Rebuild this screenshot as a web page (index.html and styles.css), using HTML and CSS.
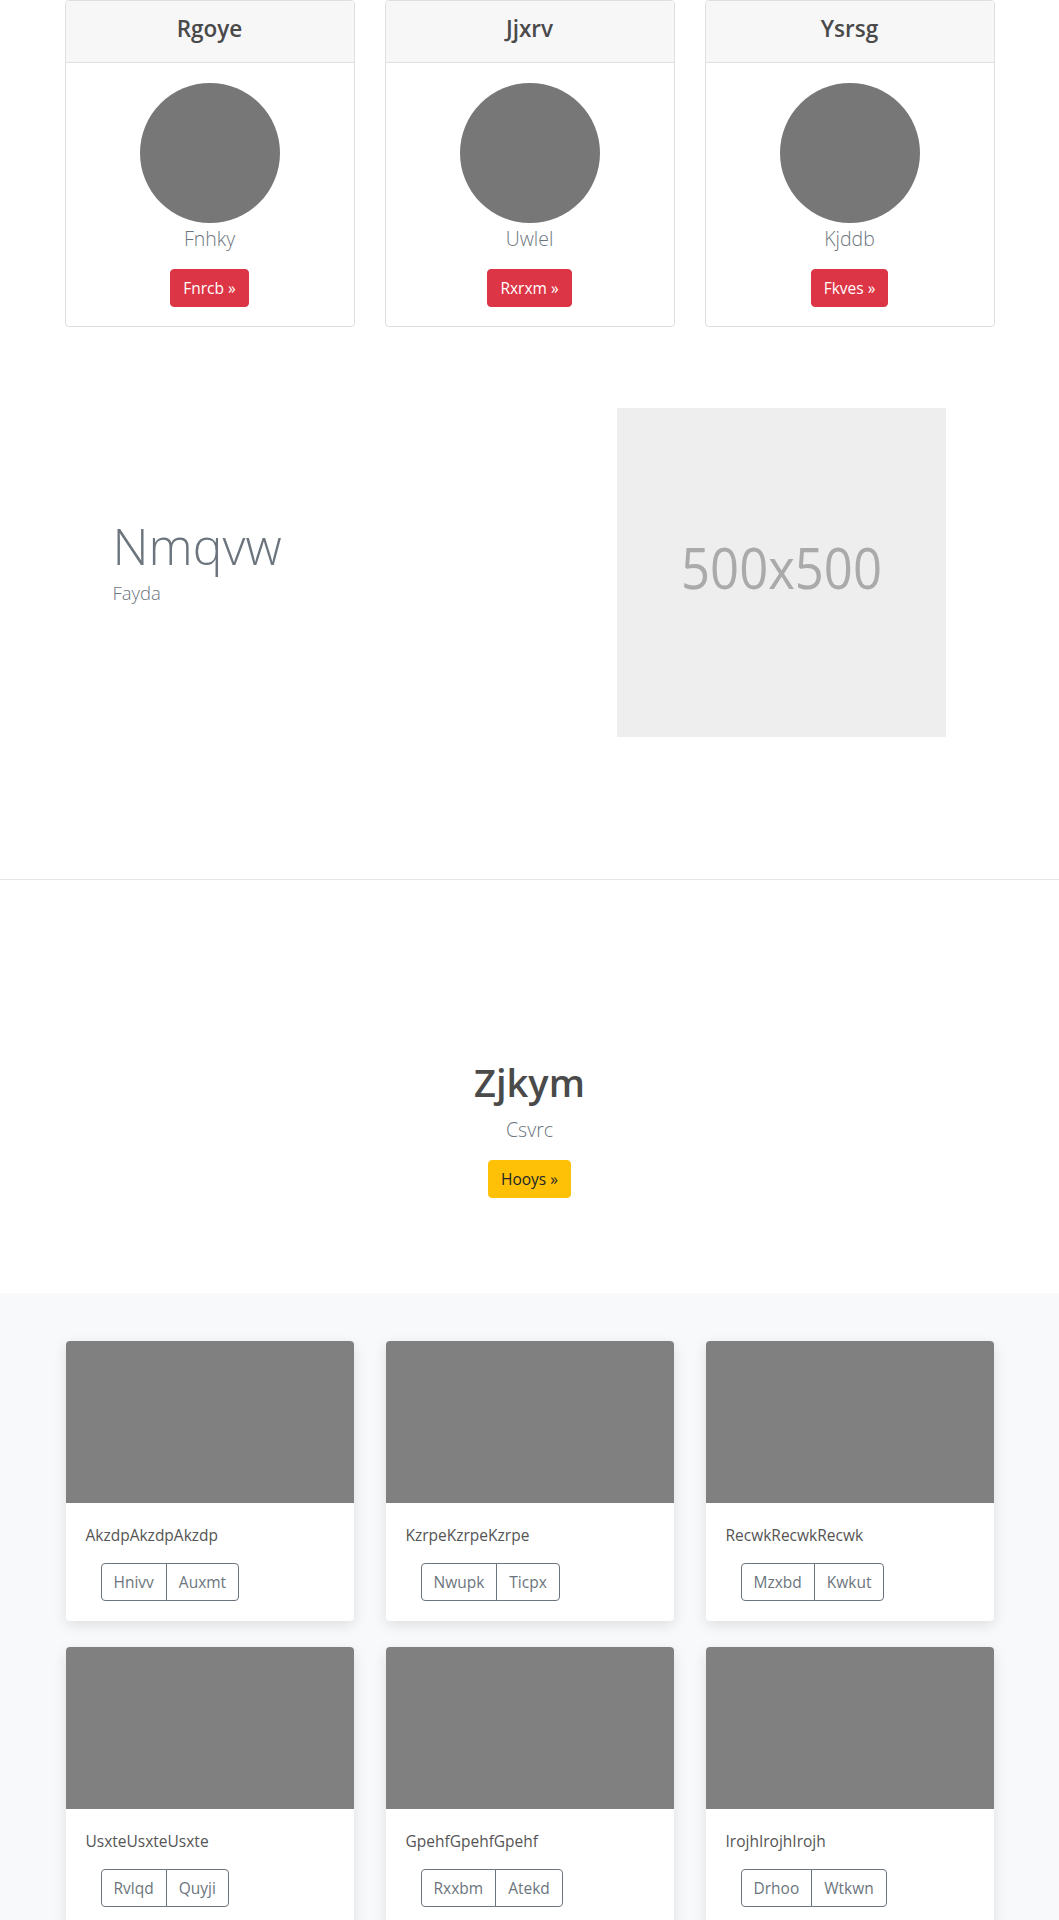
FILE: index.html
```html
<!DOCTYPE html>
<html lang="en">
<head>
<meta charset="utf-8">
<title>Page</title>
<link rel="stylesheet" href="styles.css">
</head>
<body>
<section class="team">
  <div class="container deck">
    <div class="tcard">
      <div class="tcard-header"><h4>Rgoye</h4></div>
      <div class="tcard-body">
        <div class="avatar"></div>
        <p class="tname">Fnhky</p>
        <a class="btn btn-danger" href="#">Fnrcb &raquo;</a>
      </div>
    </div>
    <div class="tcard">
      <div class="tcard-header"><h4>Jjxrv</h4></div>
      <div class="tcard-body">
        <div class="avatar"></div>
        <p class="tname">Uwlel</p>
        <a class="btn btn-danger" href="#">Rxrxm &raquo;</a>
      </div>
    </div>
    <div class="tcard">
      <div class="tcard-header"><h4>Ysrsg</h4></div>
      <div class="tcard-body">
        <div class="avatar"></div>
        <p class="tname">Kjddb</p>
        <a class="btn btn-danger" href="#">Fkves &raquo;</a>
      </div>
    </div>
  </div>
</section>

<section class="feature">
  <div class="container feature-row">
    <div class="feature-text">
      <h2 class="display">Nmqvw</h2>
      <p class="lead">Fayda</p>
    </div>
    <div class="feature-img">
      <svg width="329" height="329" viewBox="0 0 329 329" role="img" aria-label="500x500">
        <rect width="329" height="329" fill="#eeeeee"></rect>
        <text x="164.5" y="181" text-anchor="middle" class="ph-text" textLength="201" lengthAdjust="spacingAndGlyphs">500x500</text>
      </svg>
    </div>
  </div>
</section>

<hr class="divider">

<section class="hero">
  <h1 class="hero-title">Zjkym</h1>
  <p class="hero-lead">Csvrc</p>
  <a class="btn btn-warning" href="#">Hooys &raquo;</a>
</section>

<section class="album">
  <div class="album-grid">
    <div class="acard">
      <div class="athumb"></div>
      <div class="acard-body">
        <p class="acard-text">AkzdpAkzdpAkzdp</p>
        <div class="btn-group"><a class="btn btn-outline" href="#">Hnivv</a><a class="btn btn-outline" href="#">Auxmt</a></div>
      </div>
    </div>
    <div class="acard">
      <div class="athumb"></div>
      <div class="acard-body">
        <p class="acard-text">KzrpeKzrpeKzrpe</p>
        <div class="btn-group"><a class="btn btn-outline" href="#">Nwupk</a><a class="btn btn-outline" href="#">Ticpx</a></div>
      </div>
    </div>
    <div class="acard">
      <div class="athumb"></div>
      <div class="acard-body">
        <p class="acard-text">RecwkRecwkRecwk</p>
        <div class="btn-group"><a class="btn btn-outline" href="#">Mzxbd</a><a class="btn btn-outline" href="#">Kwkut</a></div>
      </div>
    </div>
    <div class="acard">
      <div class="athumb"></div>
      <div class="acard-body">
        <p class="acard-text">UsxteUsxteUsxte</p>
        <div class="btn-group"><a class="btn btn-outline" href="#">Rvlqd</a><a class="btn btn-outline" href="#">Quyji</a></div>
      </div>
    </div>
    <div class="acard">
      <div class="athumb"></div>
      <div class="acard-body">
        <p class="acard-text">GpehfGpehfGpehf</p>
        <div class="btn-group"><a class="btn btn-outline" href="#">Rxxbm</a><a class="btn btn-outline" href="#">Atekd</a></div>
      </div>
    </div>
    <div class="acard">
      <div class="athumb"></div>
      <div class="acard-body">
        <p class="acard-text">IrojhIrojhIrojh</p>
        <div class="btn-group"><a class="btn btn-outline" href="#">Drhoo</a><a class="btn btn-outline" href="#">Wtkwn</a></div>
      </div>
    </div>
  </div>
</section>
</body>
</html>
```
FILE: styles.css
```css
* { box-sizing: border-box; }

html, body {
  margin: 0;
  padding: 0;
}

body {
  font-family: "Segoe UI", "Open Sans", "Noto Sans", sans-serif;
  font-size: 16px;
  line-height: 1.5;
  color: #555555;
  background: #ffffff;
}

.container {
  width: 930px;
  margin: 0 auto;
}

/* ---------- buttons ---------- */
.btn {
  display: inline-block;
  padding: 6px 12px;
  font-size: 15.5px;
  line-height: 24px;
  border: 1px solid transparent;
  border-radius: 4px;
  text-decoration: none;
  font-weight: 400;
  text-align: center;
}

.btn-danger {
  background: #dc3545;
  border-color: #dc3545;
  color: #ffffff;
}

.btn-warning {
  background: #ffc107;
  border-color: #ffc107;
  color: #212529;
}

.btn-outline {
  background: transparent;
  border-color: #6c757d;
  color: #6c757d;
}

.btn-group {
  display: inline-flex;
  margin-left: 15px;
}

.btn-group .btn + .btn {
  margin-left: -1px;
  border-top-left-radius: 0;
  border-bottom-left-radius: 0;
}

.btn-group .btn:first-child {
  border-top-right-radius: 0;
  border-bottom-right-radius: 0;
}

/* ---------- team cards ---------- */
.deck {
  display: grid;
  grid-template-columns: repeat(3, 1fr);
  column-gap: 30px;
}

.tcard {
  border: 1px solid #dfdfdf;
  border-radius: 4px;
  background: #ffffff;
  overflow: hidden;
}

.tcard-header {
  background: #f7f7f7;
  border-bottom: 1px solid #dfdfdf;
  padding: 13px 20px 18px;
  text-align: center;
}

.tcard-header h4 {
  margin: 0;
  font-size: 22.5px;
  line-height: 30px;
  font-weight: 600;
  color: #4a4a4a;
}

.tcard-body {
  padding: 20px 20px 19px;
  text-align: center;
}

.avatar {
  width: 140px;
  height: 140px;
  border-radius: 50%;
  background: #777777;
  margin: 0 auto;
}

.tname {
  margin: 1px 0 15px;
  font-size: 19.5px;
  line-height: 30px;
  font-weight: 300;
  color: #6c757d;
}

/* ---------- feature ---------- */
.feature {
  padding: 81px 0 142px;
}

.feature-row {
  display: flex;
  align-items: flex-start;
  justify-content: space-between;
}

.feature-text {
  padding-left: 48px;
  padding-top: 108px;
}

.display {
  margin: 0;
  font-size: 50px;
  line-height: 60px;
  font-weight: 300;
  color: #6c757d;
}

.lead {
  margin: 4px 0 0;
  font-size: 18.5px;
  line-height: 26px;
  font-weight: 300;
  color: #6c757d;
}

.feature-img {
  margin-right: 49px;
  line-height: 0;
}

.feature-img svg {
  display: block;
}

.ph-text {
  font-family: "Open Sans", "Noto Sans", sans-serif;
  font-size: 57px;
  fill: #aaaaaa;
}

.divider {
  margin: 0;
  border: 0;
  border-top: 1px solid #e5e5e5;
}

/* ---------- hero ---------- */
.hero {
  padding: 178px 0 95px;
  text-align: center;
}

.hero-title {
  margin: 0 0 9px;
  font-size: 38px;
  line-height: 48px;
  font-weight: 600;
  color: #4a4a4a;
}

.hero-lead {
  margin: 0 0 15px;
  font-size: 19.5px;
  line-height: 30px;
  font-weight: 300;
  color: #6c757d;
}

/* ---------- album ---------- */
.album {
  background: #f8f9fa;
  padding: 48px 0 48px;
}

.album-grid {
  width: 928px;
  margin: 0 auto;
  display: grid;
  grid-template-columns: repeat(3, 1fr);
  column-gap: 32px;
  row-gap: 26px;
}

.acard {
  background: #ffffff;
  border-radius: 4px;
  overflow: hidden;
  box-shadow: 0 4px 14px rgba(0, 0, 0, 0.11);
}

.athumb {
  height: 162px;
  background: #808080;
}

.acard-body {
  padding: 20px;
}

.acard-text {
  margin: 0 0 16px;
  font-size: 15.5px;
  line-height: 24px;
  color: #555555;
}
```
